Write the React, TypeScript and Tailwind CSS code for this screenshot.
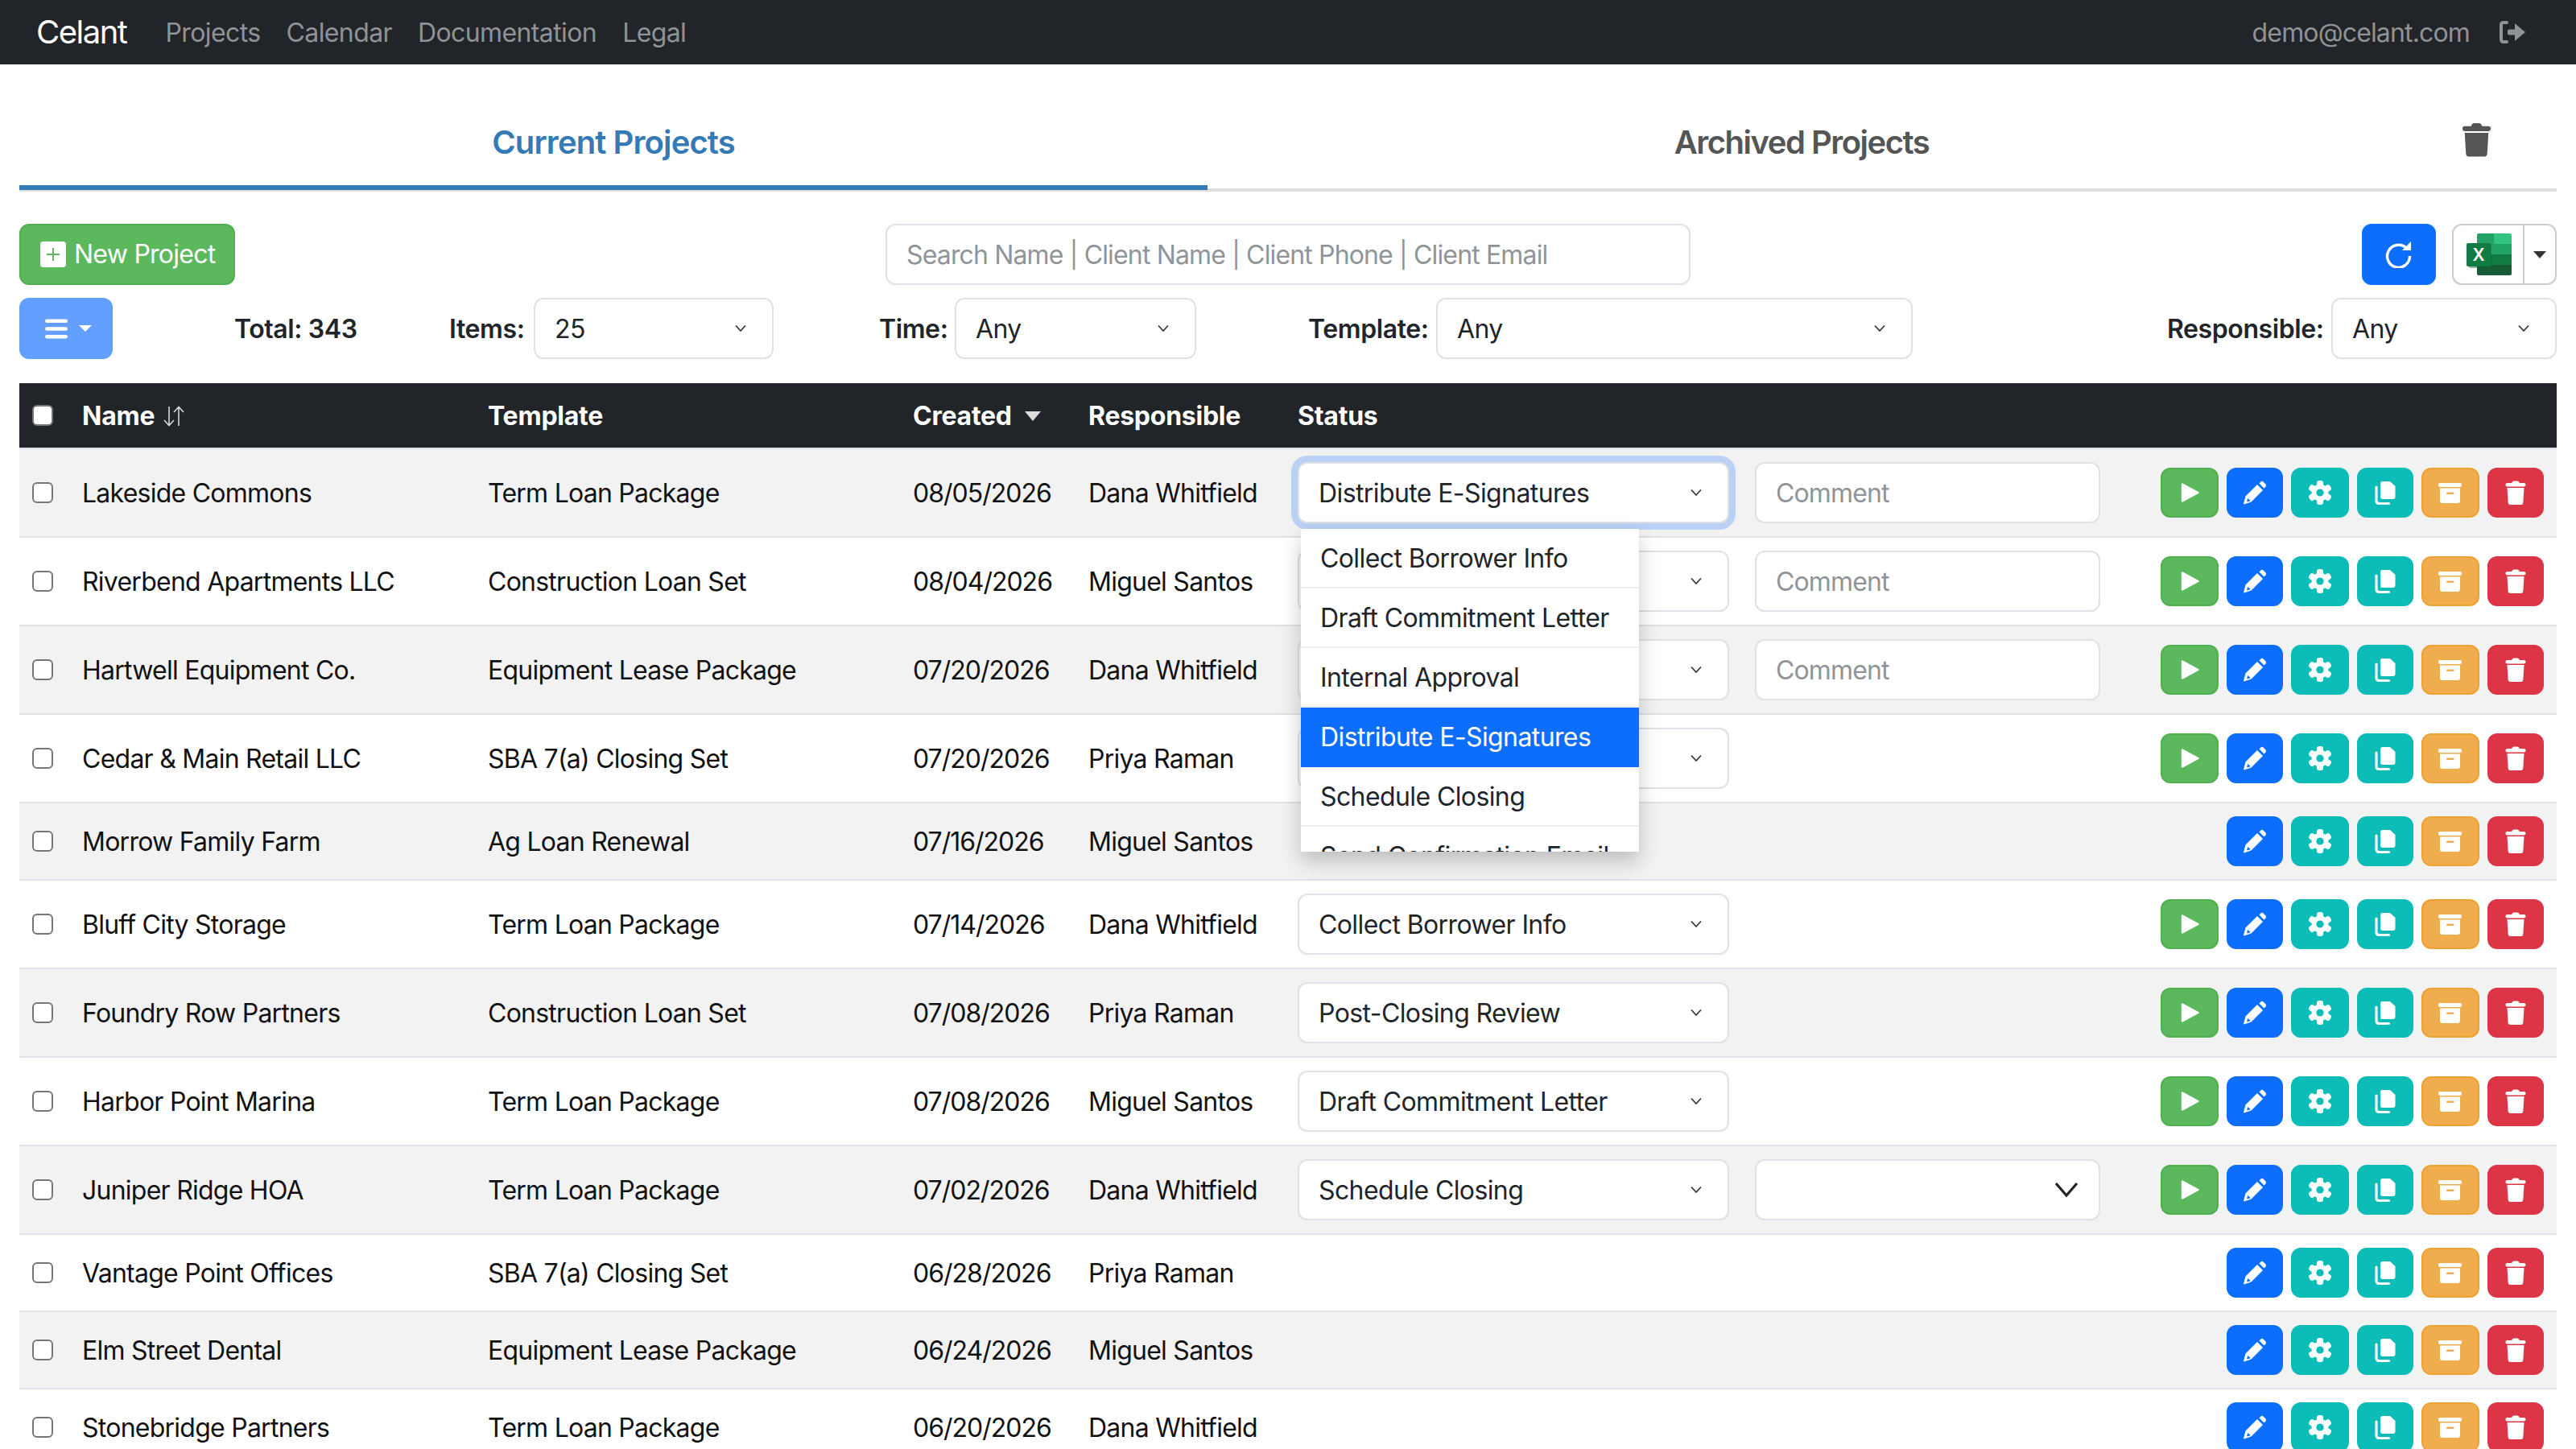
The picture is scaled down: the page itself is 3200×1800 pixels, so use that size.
import React from "react";

type Row = { name: string; template: string; created: string; who: string; status?: string; comment?: "input" | "select"; play: boolean };

const rows: Row[] = [
  { name: "Lakeside Commons", template: "Term Loan Package", created: "08/05/2026", who: "Dana Whitfield", status: "Distribute E-Signatures", comment: "input", play: true },
  { name: "Riverbend Apartments LLC", template: "Construction Loan Set", created: "08/04/2026", who: "Miguel Santos", status: "", comment: "input", play: true },
  { name: "Hartwell Equipment Co.", template: "Equipment Lease Package", created: "07/20/2026", who: "Dana Whitfield", status: "", comment: "input", play: true },
  { name: "Cedar & Main Retail LLC", template: "SBA 7(a) Closing Set", created: "07/20/2026", who: "Priya Raman", status: "", play: true },
  { name: "Morrow Family Farm", template: "Ag Loan Renewal", created: "07/16/2026", who: "Miguel Santos", play: false },
  { name: "Bluff City Storage", template: "Term Loan Package", created: "07/14/2026", who: "Dana Whitfield", status: "Collect Borrower Info", play: true },
  { name: "Foundry Row Partners", template: "Construction Loan Set", created: "07/08/2026", who: "Priya Raman", status: "Post-Closing Review", play: true },
  { name: "Harbor Point Marina", template: "Term Loan Package", created: "07/08/2026", who: "Miguel Santos", status: "Draft Commitment Letter", play: true },
  { name: "Juniper Ridge HOA", template: "Term Loan Package", created: "07/02/2026", who: "Dana Whitfield", status: "Schedule Closing", comment: "select", play: true },
  { name: "Vantage Point Offices", template: "SBA 7(a) Closing Set", created: "06/28/2026", who: "Priya Raman", play: false },
  { name: "Elm Street Dental", template: "Equipment Lease Package", created: "06/24/2026", who: "Miguel Santos", play: false },
  { name: "Stonebridge Partners", template: "Term Loan Package", created: "06/20/2026", who: "Dana Whitfield", play: false },
];

const menu = ["Collect Borrower Info", "Draft Commitment Letter", "Internal Approval", "Distribute E-Signatures", "Schedule Closing", "Send Confirmation Email"];

function Chevron({ big }: { big?: boolean }) {
  return big ? (
    <svg width="32" height="24" viewBox="0 0 16 12" className="shrink-0">
      <path d="M1.5 2 L8 9.5 L14.5 2" fill="none" stroke="#212529" strokeWidth="1.6" />
    </svg>
  ) : (
    <svg width="16" height="12" viewBox="0 0 16 12" className="shrink-0">
      <path d="M2 2.5 L8 9 L14 2.5" fill="none" stroke="#343a40" strokeWidth="1.8" />
    </svg>
  );
}

function TrashIcon({ size = 32, color = "#fff" }: { size?: number; color?: string }) {
  return (
    <svg width={size} height={size} viewBox="0 0 32 32">
      <path d="M11 5 Q11.5 1.5 14 1.5 H18 Q20.5 1.5 21 5 Z" fill={color} />
      <rect x="3.5" y="4" width="25" height="4.5" rx="2.2" fill={color} />
      <path d="M5.5 10 H26.5 L25.4 28 Q25.2 31 22.5 31 H9.5 Q6.8 31 6.6 28 Z" fill={color} />
    </svg>
  );
}

const btn = "flex items-center justify-center h-[62px] rounded-xl border-2";

function Actions({ play }: { play: boolean }) {
  return (
    <div className="ml-auto flex gap-[10px]">
      {play && (
        <button className={`${btn} w-[72px] bg-[#5cb85c] border-[#4fb04f]`}>
          <svg width="32" height="32" viewBox="0 0 32 32">
            <path d="M7 5.5 L26.5 16 L7 26.5 Z" fill="#fff" stroke="#fff" strokeWidth="2.4" strokeLinejoin="round" />
          </svg>
        </button>
      )}
      <button className={`${btn} w-[70px] bg-[#0d6efd] border-[#0d6efd]`}>
        <svg width="32" height="32" viewBox="0 0 32 32">
          <path d="M5 20.5 L19 6.5 L25.5 13 L11.5 27 L2.5 30 Z" fill="#fff" stroke="#fff" strokeWidth="1" strokeLinejoin="round" />
          <path d="M21.5 4.5 L23.5 2.5 Q25 1.2 26.5 2.5 L29.5 5.5 Q30.8 7 29.5 8.5 L27.5 10.5 Z" fill="#fff" />
          <path d="M7.5 23.5 L6.5 27 L10 26 Z" fill="#0d6efd" stroke="#0d6efd" strokeWidth="0.8" />
        </svg>
      </button>
      <button className={`${btn} w-[72px] bg-[#0cbcb7] border-[#0cbcb7]`}>
        <svg width="32" height="32" viewBox="0 0 32 32">
          <circle cx="16" cy="16" r="10.5" fill="#fff" />
          {[0, 60, 120].map((a) => (
            <rect key={a} x="12" y="1" width="8" height="30" rx="3" fill="#fff" transform={`rotate(${a} 16 16)`} />
          ))}
          <circle cx="16" cy="16" r="4.6" fill="#0cbcb7" />
        </svg>
      </button>
      <button className={`${btn} w-[70px] bg-[#0cbcb7] border-[#0cbcb7]`}>
        <svg width="32" height="32" viewBox="0 0 32 32">
          <path d="M12.5 2 H22 L28.5 8 V21 Q28.5 24 25.5 24 H12.5 Q10 24 10 21 V5 Q10 2 12.5 2 Z" fill="#fff" />
          <path d="M5 9 V26 Q5 29.5 8.5 29.5 H20.5" fill="none" stroke="#fff" strokeWidth="3.2" strokeLinecap="round" />
        </svg>
      </button>
      <button className={`${btn} w-[72px] bg-[#f0ad4e] border-[#eea236]`}>
        <svg width="32" height="32" viewBox="0 0 32 32">
          <rect x="1" y="4" width="29" height="5" rx="2" fill="#fff" />
          <path d="M3 10.5 H28 V26 Q28 29 25 29 H6 Q3 29 3 26 Z" fill="#fff" />
          <rect x="11" y="15.5" width="9.5" height="2.6" rx="1.3" fill="#f0ad4e" />
        </svg>
      </button>
      <button className={`${btn} w-[70px] bg-[#dc3545] border-[#dc3545]`}>
        <TrashIcon />
      </button>
    </div>
  );
}

function Select({ value, className }: { value: string; className: string }) {
  return (
    <div className={`flex items-center justify-between h-[76px] bg-white border-2 border-[#dee2e6] rounded-xl pl-[24px] pr-[31px] text-[32px] text-[#212529] tracking-[-0.6px] ${className}`}>
      <span className="whitespace-nowrap pt-[2px]">{value}</span>
      <Chevron />
    </div>
  );
}

const td = "border-b-2 border-[#dee2e6] px-[16px] pt-[17px] pb-[15px] text-[32px] text-[#111] tracking-[-0.75px] whitespace-nowrap align-middle";
const tdBox = "border-b-2 border-[#dee2e6] p-[16px] align-middle";
const th = "border-b-2 border-[#dee2e6] px-[16px] pt-[17px] pb-[15px] text-[32px] leading-[48px] font-bold tracking-[-0.25px] text-white text-left bg-[#212529] whitespace-nowrap";
const box = "block appearance-none w-[26px] h-[26px] bg-white border-2 border-[#767676] rounded-md -mt-[1px]";
const placeholder = "placeholder:text-[#8f9499] outline-none tracking-[-0.85px]";

export default function App() {
  return (
    <div className="h-screen overflow-hidden bg-white text-[#212529] text-[32px]" style={{ fontFamily: "Inter, 'Liberation Sans', sans-serif" }}>
      <nav className="h-[80px] bg-[#212529] flex items-center pl-[45px] pr-[62px] text-[#909295] tracking-[-0.6px]">
        <span className="text-[40px] text-white tracking-[-1.5px] mr-[48px]">Celant</span>
        <div className="flex gap-[32px] pt-[2px]">
          <span>Projects</span>
          <span>Calendar</span>
          <span>Documentation</span>
          <span>Legal</span>
        </div>
        <span className="ml-auto pt-[2px] tracking-[-0.85px]">demo@celant.com</span>
        <svg width="34" height="30" viewBox="0 0 34 30" className="ml-[36px]">
          <path d="M10 3 H6 Q3 3 3 6 V24 Q3 27 6 27 H10" fill="none" stroke="#909295" strokeWidth="4" strokeLinecap="round" />
          <path d="M13 11.5 H20 V4 L33 15 L20 26 V18.5 H13 Q11 18.5 11 16.5 V13.5 Q11 11.5 13 11.5 Z" fill="#909295" />
        </svg>
      </nav>

      <div className="px-[24px]">
        <div className="flex h-[158px] border-b-4 border-[#dddddd]">
          <div className="w-[1476px] h-[156px] -mb-[2px] pt-[44px] flex items-center justify-center border-b-[6px] border-[#337ab7] text-[40px] font-semibold tracking-[-0.9px] text-[#337ab7] relative">
            Current Projects
          </div>
          <div className="w-[1476px] h-[150px] pt-[44px] flex items-center justify-center text-[40px] font-semibold tracking-[-1.5px] text-[#555]">Archived Projects</div>
          <div className="w-[200px] h-[150px] pt-[37px] flex items-center justify-center">
            <TrashIcon size={45} color="#555" />
          </div>
        </div>

        <div className="flex mt-[40px] h-[76px]">
          <button className="w-[268px] h-[76px] flex items-center pl-[24px] gap-[10px] bg-[#5cb85c] border-2 border-[#4fb04f] rounded-xl text-white tracking-[-0.75px]">
            <svg width="32" height="32" viewBox="0 0 32 32" className="shrink-0">
              <rect width="32" height="32" rx="4" fill="#fff" />
              <path d="M16 8 V24 M8 16 H24" stroke="#5cb85c" strokeWidth="2" />
            </svg>
            New Project
          </button>
          <input
            placeholder="Search Name | Client Name | Client Phone | Client Email"
            className={`ml-[808px] w-[1000px] h-[76px] px-[24px] border-2 border-[#dee2e6] rounded-xl ${placeholder}`}
          />
          <div className="ml-auto flex gap-[20px]">
            <button className="w-[92px] h-[76px] flex items-center justify-center bg-[#0d6efd] rounded-xl">
              <svg width="34" height="34" viewBox="0 0 34 34">
                <path d="M26 9 A14 14 0 1 0 30.5 19" fill="none" stroke="#fff" strokeWidth="3.4" />
                <path d="M21 12 H32 V1 Z" fill="#fff" />
              </svg>
            </button>
            <div className="w-[130px] h-[76px] flex border-2 border-[#cccccc] rounded-xl bg-white">
              <div className="w-[88px] flex items-center justify-end pr-[14px] border-r-2 border-[#cccccc]">
                <svg width="56" height="52" viewBox="0 0 56 52">
                  <path d="M13 2 Q13 0 15 0 H34 V13 H13 Z" fill="#21a366" />
                  <path d="M34 0 H54 Q56 0 56 2 V13 H34 Z" fill="#33c481" />
                  <rect x="13" y="13" width="43" height="13" fill="#21a366" />
                  <rect x="13" y="26" width="43" height="13" fill="#107c41" />
                  <path d="M13 39 H56 V50 Q56 52 54 52 H15 Q13 52 13 50 Z" fill="#185c37" />
                  <rect x="3" y="14" width="28" height="29" rx="2" fill="#0b5a30" opacity="0.45" />
                  <rect x="0" y="12" width="30" height="29" rx="2" fill="#107c41" />
                  <text x="15" y="34" textAnchor="middle" fontSize="21" fontWeight="600" fill="#fff" fontFamily="Inter, sans-serif">X</text>
                </svg>
              </div>
              <div className="flex-1 flex items-center justify-center">
                <svg width="16" height="9" viewBox="0 0 16 9">
                  <path d="M0 0 H16 L8 9 Z" fill="#333" />
                </svg>
              </div>
            </div>
          </div>
        </div>

        <div className="flex mt-[16px] h-[76px] items-center font-semibold tracking-[-0.4px]">
          <div className="w-[267px]">
            <button className="w-[116px] h-[76px] flex items-center pl-[32px] gap-[14px] bg-[#629ffe] rounded-xl">
              <svg width="28" height="25" viewBox="0 0 28 25">
                <rect y="0.5" width="28" height="4.4" rx="2.2" fill="#fff" />
                <rect y="10.3" width="28" height="4.4" rx="2.2" fill="#fff" />
                <rect y="20.1" width="28" height="4.4" rx="2.2" fill="#fff" />
              </svg>
              <svg width="16" height="8" viewBox="0 0 16 8">
                <path d="M0 0 H16 L8 8 Z" fill="#fff" />
              </svg>
            </button>
          </div>
          <div className="w-[267px] pt-[2px]">Total: 343</div>
          <div className="w-[403px] flex items-center justify-between">
            <span className="pt-[2px]">Items:</span>
            <Select value="25" className="w-[298px] font-normal" />
          </div>
          <div className="ml-[131px] w-[394px] flex items-center justify-between">
            <span className="pt-[2px]">Time:</span>
            <Select value="Any" className="w-[300px] font-normal" />
          </div>
          <div className="ml-[139px] w-[751px] flex items-center justify-between">
            <span className="pt-[2px]">Template:</span>
            <Select value="Any" className="w-[592px] font-normal" />
          </div>
          <div className="ml-auto w-[484px] flex items-center justify-between">
            <span className="pt-[2px]">Responsible:</span>
            <Select value="Any" className="w-[280px] font-normal" />
          </div>
        </div>

        <table className="mt-[30px] w-[3152px] table-fixed border-separate border-spacing-0">
          <colgroup>
            <col className="w-[62px]" />
            <col className="w-[504px]" />
            <col className="w-[528px]" />
            <col className="w-[218px]" />
            <col className="w-[260px]" />
            <col className="w-[1580px]" />
          </colgroup>
          <thead>
            <tr>
              <th className="border-b-2 border-[#dee2e6] p-[16px] bg-[#212529]">
                <input type="checkbox" className={box} />
              </th>
              <th className={th}>
                <span className="inline-flex items-center gap-[10px]">
                  Name
                  <svg width="28" height="26" viewBox="0 0 28 26">
                    <path d="M8 1 V24 M2 18 L8 24.5 L14 18 M20 25 V2 M14 8 L20 1.5 L26 8" fill="none" stroke="#d8d8d8" strokeWidth="1.6" />
                  </svg>
                </span>
              </th>
              <th className={th}>Template</th>
              <th className={th}>
                <span className="inline-flex items-center gap-[16px]">
                  Created
                  <svg width="20" height="12" viewBox="0 0 20 12">
                    <path d="M0 0 H20 L10 12 Z" fill="#dddddd" />
                  </svg>
                </span>
              </th>
              <th className={th}>Responsible</th>
              <th className={th}>Status</th>
            </tr>
          </thead>
          <tbody>
            {rows.map((r, i) => (
              <tr key={r.name} className={i % 2 === 0 ? "bg-[#f2f2f2]" : "bg-white"}>
                <td className={tdBox}>
                  <input type="checkbox" className={box} />
                </td>
                <td className={td}>{r.name}</td>
                <td className={td}>{r.template}</td>
                <td className={`${td} tracking-[-1px]`}>{r.created}</td>
                <td className={td}>{r.who}</td>
                <td className={tdBox}>
                  <div className="flex items-center">
                    {r.status !== undefined && (
                      <div className="relative w-[536px]">
                        <Select
                          value={r.status}
                          className={i === 0 ? "w-[536px] border-[#86b7fe] shadow-[0_0_0_8px_rgba(13,110,253,0.25)]" : "w-[536px]"}
                        />
                        {i === 0 && (
                          <div className="absolute z-10 left-[4px] top-[83px] w-[420px] h-[401px] overflow-hidden bg-white shadow-[0_12px_24px_rgba(0,0,0,0.22)] text-[32px] tracking-[-0.6px]">
                            {menu.map((m) => (
                              <div
                                key={m}
                                className={
                                  m === r.status
                                    ? "h-[74px] flex items-center px-[24px] pt-[2px] bg-[#0d6efd] text-white border-b-2 border-[#0d6efd] whitespace-nowrap"
                                    : "h-[74px] flex items-center px-[24px] pt-[2px] text-[#212529] border-b-2 border-[#eeeeee] whitespace-nowrap"
                                }
                              >
                                {m}
                              </div>
                            ))}
                          </div>
                        )}
                      </div>
                    )}
                    {r.comment === "input" && (
                      <input
                        placeholder="Comment"
                        className={`ml-[32px] w-[429px] h-[76px] px-[24px] text-[32px] bg-white border-2 border-[#dee2e6] rounded-xl ${placeholder}`}
                      />
                    )}
                    {r.comment === "select" && (
                      <div className="ml-[32px] w-[429px] h-[76px] flex items-center justify-end pr-[24px] bg-white border-2 border-[#dee2e6] rounded-xl">
                        <Chevron big />
                      </div>
                    )}
                    <Actions play={r.play} />
                  </div>
                </td>
              </tr>
            ))}
          </tbody>
        </table>
      </div>
    </div>
  );
}
